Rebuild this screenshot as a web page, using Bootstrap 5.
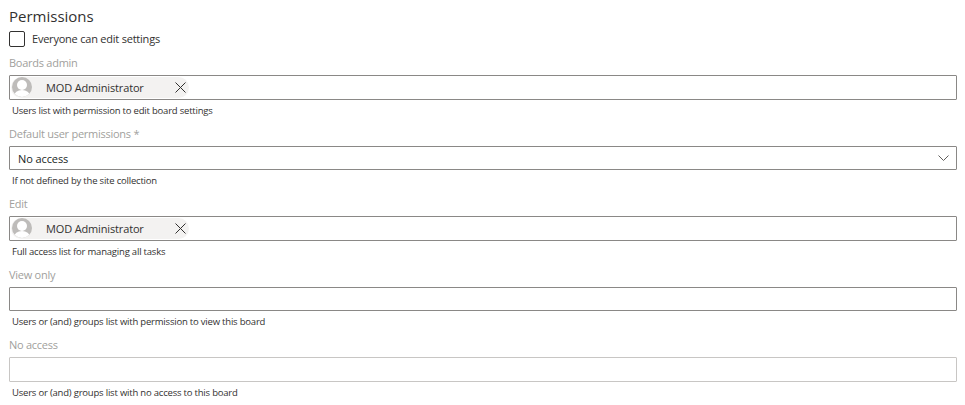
<!DOCTYPE html>
<html lang="en">
<head>
<meta charset="utf-8">
<title>Permissions</title>
<link rel="stylesheet" href="https://cdn.jsdelivr.net/npm/bootstrap@5.3.0/dist/css/bootstrap.min.css">
<style>
html,body{background:#fff;overflow:hidden}
body{font-family:"Open Sans","Noto Sans",sans-serif;color:#323130;font-size:12px}
.perm-wrap{padding:7px 8px 0 9px}
.perm-title{font-size:15px;font-weight:500;line-height:19px;margin:0 0 5px;color:#323130}
.perm-check{height:16px;gap:7px;margin-bottom:6px}
.perm-box{width:16px;height:16px;border:1px solid #323130;border-radius:2px;background:#fff;appearance:none;margin:0;flex:none}
.perm-check label{font-size:11px;line-height:16px;letter-spacing:-.22px}
.perm-field{height:70.5px}
.perm-label{height:22px;line-height:18px;padding-top:1px;font-size:11px;color:#a19f9d;margin:0;display:block;letter-spacing:-.26px}
.perm-input{height:24.5px;border:1px solid #8a8886;border-radius:1px;background:#fff;padding:0 7px 0 1px}
.perm-input.is-light{border-color:#c8c6c4}
.perm-help{font-size:9.500px;line-height:13px;padding:4px 0 0 3px;color:#323130;letter-spacing:-.2px}
.perm-chip{height:21px;width:178px;background:#f3f2f1;border-radius:11px;padding-right:3px}
.perm-avatar{width:20px;height:20px;flex:none;margin-left:1px;margin-right:14px;border-radius:50%;background:#bebcba;overflow:hidden}
.perm-name{font-size:11px;line-height:21px;color:#323130;flex:1;letter-spacing:-.15px}
.perm-select-text{font-size:11px;padding:2px 0 0 7px;color:#201f1e;flex:1;letter-spacing:-.1px}
.perm-icon{display:block;flex:none}
</style>
</head>
<body>
<div class="perm-wrap">
  <h2 class="perm-title">Permissions</h2>
  <div class="perm-check d-flex align-items-center">
    <input class="perm-box" type="checkbox" id="everyone">
    <label for="everyone">Everyone can edit settings</label>
  </div>

  <div class="perm-field">
    <span class="perm-label">Boards admin</span>
    <div class="perm-input d-flex align-items-center">
      <div class="perm-chip d-flex align-items-center">
        <div class="perm-avatar"><svg width="20" height="20" viewBox="0 0 20 20"><circle cx="10" cy="8" r="5" fill="#fff"/><ellipse cx="10" cy="19" rx="8" ry="6" fill="#fff"/></svg></div>
        <span class="perm-name">MOD Administrator</span>
        <svg class="perm-icon" width="11" height="11" viewBox="0 0 11 11"><path d="M.5.5l10 10M10.500.5l-10 10" stroke="#323130" fill="none"/></svg>
      </div>
    </div>
    <div class="perm-help">Users list with permission to edit board settings</div>
  </div>

  <div class="perm-field">
    <span class="perm-label">Default user permissions *</span>
    <div class="perm-input d-flex align-items-center">
      <span class="perm-select-text">No access</span>
      <svg class="perm-icon" width="11" height="6" viewBox="0 0 11 6"><path d="M.5.500l5 5 5-5" stroke="#605e5c" fill="none"/></svg>
    </div>
    <div class="perm-help">If not defined by the site collection</div>
  </div>

  <div class="perm-field">
    <span class="perm-label">Edit</span>
    <div class="perm-input d-flex align-items-center">
      <div class="perm-chip d-flex align-items-center">
        <div class="perm-avatar"><svg width="20" height="20" viewBox="0 0 20 20"><circle cx="10" cy="8" r="5" fill="#fff"/><ellipse cx="10" cy="19" rx="8" ry="6" fill="#fff"/></svg></div>
        <span class="perm-name">MOD Administrator</span>
        <svg class="perm-icon" width="11" height="11" viewBox="0 0 11 11"><path d="M.5.5l10 10M10.500.5l-10 10" stroke="#323130" fill="none"/></svg>
      </div>
    </div>
    <div class="perm-help">Full access list for managing all tasks</div>
  </div>

  <div class="perm-field">
    <span class="perm-label">View only</span>
    <div class="perm-input"></div>
    <div class="perm-help">Users or (and) groups list with permission to view this board</div>
  </div>

  <div class="perm-field">
    <span class="perm-label">No access</span>
    <div class="perm-input is-light"></div>
    <div class="perm-help">Users or (and) groups list with no access to this board</div>
  </div>
</div>
</body>
</html>
